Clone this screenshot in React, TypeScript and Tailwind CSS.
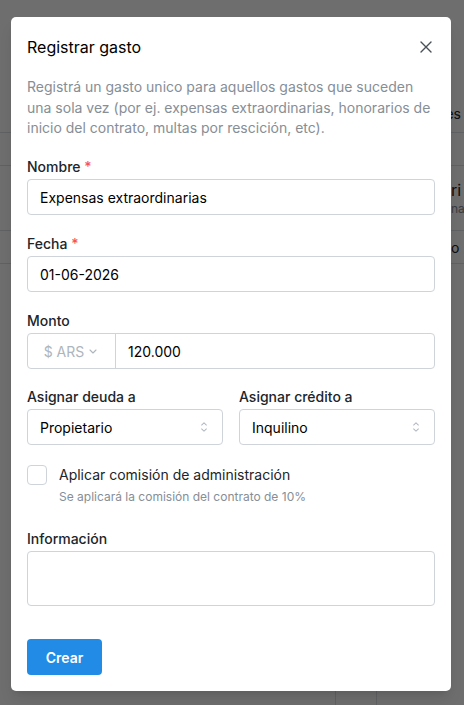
import React from "react";

function SortChevron() {
  return (
    <svg width="16" height="16" viewBox="0 0 15 15" fill="none" className="text-[#adb5bd]">
      <path
        d="M4.93179 5.43179C4.75605 5.60753 4.75605 5.89245 4.93179 6.06819C5.10753 6.24392 5.39245 6.24392 5.56819 6.06819L7.49999 4.13638L9.43179 6.06819C9.60753 6.24392 9.89245 6.24392 10.0682 6.06819C10.2439 5.89245 10.2439 5.60753 10.0682 5.43179L7.81819 3.18179C7.73379 3.0974 7.61933 3.04999 7.49999 3.04999C7.38064 3.04999 7.26618 3.0974 7.18179 3.18179L4.93179 5.43179ZM10.0682 9.56819C10.2439 9.39245 10.2439 9.10753 10.0682 8.93179C9.89245 8.75606 9.60753 8.75606 9.43179 8.93179L7.49999 10.8636L5.56819 8.93179C5.39245 8.75606 5.10753 8.75606 4.93179 8.93179C4.75605 9.10753 4.75605 9.39245 4.93179 9.56819L7.18179 11.8182C7.35753 11.9939 7.64245 11.9939 7.81819 11.8182L10.0682 9.56819Z"
        fill="currentColor"
        fillRule="evenodd"
        clipRule="evenodd"
      />
    </svg>
  );
}

function Label({ children, required }: { children: React.ReactNode; required?: boolean }) {
  return (
    <div className="text-[14px] font-medium leading-[22px] text-[#212529] mb-[1px]">
      {children}
      {required && <span className="text-[#fa5252]"> *</span>}
    </div>
  );
}

function Input({ value }: { value: string }) {
  return (
    <div className="flex h-[36px] items-center rounded-[4px] border border-[#ced4da] bg-white px-[12px] text-[14px] text-black">
      {value}
    </div>
  );
}

function Select({ value }: { value: string }) {
  return (
    <div className="flex h-[36px] items-center justify-between rounded-[4px] border border-[#ced4da] bg-white pl-[12px] text-[14px] text-black">
      <span>{value}</span>
      <span className="flex w-[36px] items-center justify-center">
        <SortChevron />
      </span>
    </div>
  );
}

export default function App() {
  return (
    <div className="relative h-[705px] w-[464px] overflow-hidden bg-white font-['Inter',sans-serif]">
      {/* background page */}
      <div className="flex h-[133px] items-end justify-end border-b border-[#dee2e6] pb-[8px] pr-[3px] text-[14px] leading-[20px] text-[#212529]">
        es
      </div>
      <div className="h-[33px] border-b border-[#dee2e6]" />
      <div className="flex h-[65px] flex-col justify-center border-b border-[#dee2e6] pl-[451px]">
        <div className="whitespace-nowrap text-[16px] leading-[22px] text-[#212529]">ri</div>
        <div className="whitespace-nowrap text-[12px] leading-[16px] text-[#868e96]">na</div>
      </div>
      <div className="flex h-[33px] items-center border-b border-[#dee2e6] pl-[451px] text-[14px] text-[#212529]">
        o
      </div>
      <div className="flex h-[441px]">
        <div className="w-[335px]" />
        <div className="w-[41px] border-l border-[#dee2e6]" />
        <div className="flex-1 border-l border-[#dee2e6]" />
      </div>

      {/* overlay */}
      <div className="absolute inset-0 bg-black/[0.57]" />

      {/* modal */}
      <div className="absolute left-[11px] top-[17px] w-[440px] rounded-[5px] bg-white shadow-lg">
        <div className="flex h-[60px] items-center justify-between px-4">
          <div className="text-[16px] leading-[24px] text-[#000]">Registrar gasto</div>
          <svg width="12" height="12" viewBox="0 0 12 12" className="mr-[3px]" fill="none">
            <path d="M1 1L11 11M11 1L1 11" stroke="#495057" strokeWidth="1.4" strokeLinecap="round" />
          </svg>
        </div>
        <div className="px-4 pb-4">
          <div className="text-[14px] leading-[20.5px] text-[#868e96]">
            <div className="whitespace-nowrap">Registrá un gasto unico para aquellos gastos que suceden</div>
            <div className="whitespace-nowrap">una sola vez (por ej. expensas extraordinarias, honorarios de</div>
            <div className="whitespace-nowrap">inicio del contrato, multas por rescición, etc).</div>
          </div>

          <div className="mt-[17.5px]">
            <Label required>Nombre</Label>
            <Input value="Expensas extraordinarias" />
          </div>

          <div className="mt-[18px]">
            <Label required>Fecha</Label>
            <Input value="01-06-2026" />
          </div>

          <div className="mt-[18px]">
            <Label>Monto</Label>
            <div className="flex h-[36px] rounded-[4px] border border-[#ced4da] bg-white text-[14px]">
              <div className="flex w-[88px] items-center justify-center gap-[5px] border-r border-[#ced4da] pr-[2px] text-[#adb5bd]">
                <span>$ ARS</span>
                <svg width="8" height="5" viewBox="0 0 8 5" fill="none">
                  <path d="M1 1L4 4L7 1" stroke="#adb5bd" strokeWidth="1.1" strokeLinecap="round" strokeLinejoin="round" />
                </svg>
              </div>
              <div className="flex flex-1 items-center pl-[12px] text-black">120.000</div>
            </div>
          </div>

          <div className="mt-[17px] grid grid-cols-2 gap-4">
            <div>
              <Label>Asignar deuda a</Label>
              <Select value="Propietario" />
            </div>
            <div>
              <Label>Asignar crédito a</Label>
              <Select value="Inquilino" />
            </div>
          </div>

          <div className="mt-[20px] flex gap-[12px]">
            <div className="h-[20px] w-[20px] shrink-0 rounded-[4px] border border-[#ced4da] bg-white" />
            <div>
              <div className="text-[14px] leading-[20px] text-[#212529]">Aplicar comisión de administración</div>
              <div className="mt-[3px] text-[12px] leading-[18px] text-[#868e96]">
                Se aplicará la comisión del contrato de 10%
              </div>
            </div>
          </div>

          <div className="mt-[22px]">
            <Label>Información</Label>
            <div className="h-[55px] rounded-[4px] border border-[#ced4da] bg-white" />
          </div>

          <div className="mt-[33px]">
            <button className="flex h-[36px] w-[75px] items-center justify-center rounded-[4px] bg-[#228be6] text-[14px] font-semibold text-white">
              Crear
            </button>
          </div>
        </div>
      </div>
    </div>
  );
}
